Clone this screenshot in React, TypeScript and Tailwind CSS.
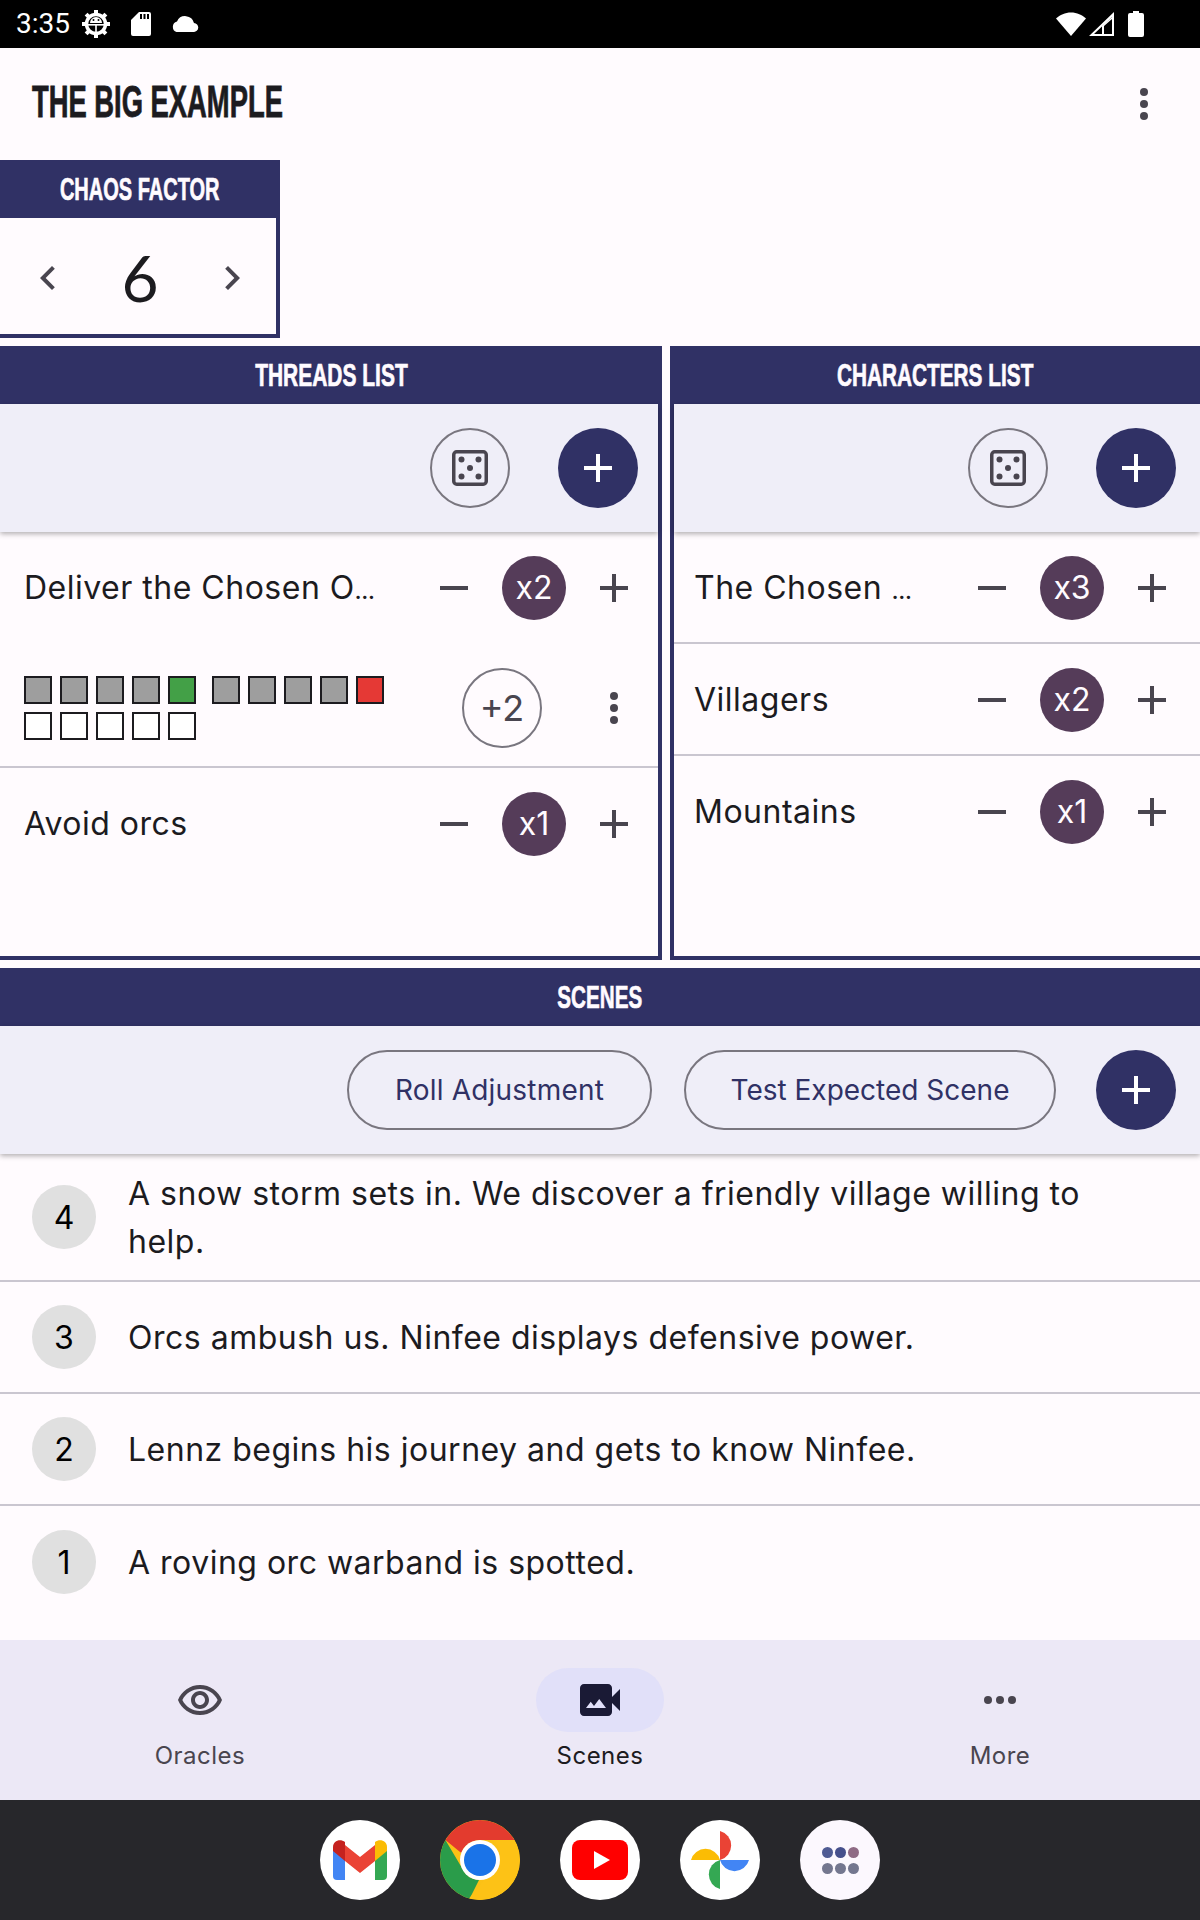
import type { ReactNode } from 'react'

const bodyFont = "font-['Inter',sans-serif]"
const headFont = "font-['Liberation_Sans',sans-serif]"

function Mi({ d, className }: { d: string; className?: string }) {
  return (
    <svg viewBox="0 0 24 24" className={className} fill="currentColor">
      <path d={d} />
    </svg>
  )
}

const ADD = 'M19 13h-6v6h-2v-6H5v-2h6V5h2v6h6v2z'
const REMOVE = 'M19 13H5v-2h14v2z'
const CHEV_L = 'M15.41 7.41 14 6l-6 6 6 6 1.41-1.41L10.83 12z'
const CHEV_R = 'M8.59 16.59 10 18l6-6-6-6-1.41 1.41L13.17 12z'
const EYE =
  'M12 6c3.79 0 7.17 2.13 8.82 5.5C19.17 14.87 15.79 17 12 17s-7.17-2.13-8.82-5.5C4.83 8.13 8.21 6 12 6m0-2C7 4 2.73 7.11 1 11.5 2.73 15.89 7 19 12 19s9.27-3.11 11-7.5C21.27 7.11 17 4 12 4zm0 5c1.38 0 2.5 1.12 2.5 2.5S13.38 14 12 14s-2.5-1.12-2.5-2.5S10.62 9 12 9m0-2c-2.48 0-4.5 2.02-4.5 4.5S9.52 16 12 16s4.5-2.02 4.5-4.5S14.48 7 12 7z'
const CAMERA =
  'M18 10.48V6c0-1.1-.9-2-2-2H4c-1.1 0-2 .9-2 2v12c0 1.1.9 2 2 2h12c1.1 0 2-.9 2-2v-4.48l4 3.98v-11l-4 3.98zM5 16l2.38-3.17L9 15l2.62-3.5L15 16H5z'

function VDots({ className }: { className?: string }) {
  return (
    <svg viewBox="0 0 8 32" className={className} fill="currentColor">
      <circle cx="4" cy="4" r="4" />
      <circle cx="4" cy="16" r="4" />
      <circle cx="4" cy="28" r="4" />
    </svg>
  )
}

function Dice() {
  return (
    <svg viewBox="0 0 36 36" className="w-9 h-9 text-[#49454f]" fill="currentColor">
      <rect x="1.750" y="1.750" width="32.500" height="32.500" rx="3" fill="none" stroke="currentColor" strokeWidth="3.500" />
      <circle cx="9.500" cy="9.500" r="3" />
      <circle cx="26.500" cy="9.500" r="3" />
      <circle cx="18" cy="18" r="3" />
      <circle cx="9.500" cy="26.500" r="3" />
      <circle cx="26.500" cy="26.500" r="3" />
    </svg>
  )
}

function Header({ scale, children }: { scale: string; children: ReactNode }) {
  return (
    <div className={`h-[58px] bg-[#303165] text-[#fffbff] flex items-center justify-center text-[32px] font-bold whitespace-nowrap [-webkit-text-stroke:0.7px_currentColor] ${headFont}`}>
      <span className={`inline-block ${scale}`}>{children}</span>
    </div>
  )
}

function RoundButton({ kind }: { kind: 'dice' | 'add' }) {
  if (kind === 'dice') {
    return (
      <div className="w-20 h-20 rounded-full border-2 border-[#79767f] flex items-center justify-center">
        <Dice />
      </div>
    )
  }
  return (
    <div className="w-20 h-20 rounded-full bg-[#303165] text-white flex items-center justify-center">
      <Mi d={ADD} className="w-12 h-12" />
    </div>
  )
}

function Toolbar({ pr, children }: { pr: string; children: ReactNode }) {
  return (
    <div className={`relative h-[128px] bg-[#efeef8] flex items-center justify-end gap-12 ${pr} shadow-[0_2px_5px_rgba(0,0,0,0.3)]`}>
      {children}
    </div>
  )
}

function Counter({ label }: { label: string }) {
  return (
    <div className="flex items-center gap-4 text-[#49454f]">
      <Mi d={REMOVE} className="w-16 h-16 p-2" />
      <div className="w-16 h-16 rounded-full bg-[#553c59] text-[#fffbff] flex items-center justify-center text-[32px]">
        {label}
      </div>
      <Mi d={ADD} className="w-16 h-16 p-2" />
    </div>
  )
}

function Ticks({ colors }: { colors: string[] }) {
  return (
    <div className="flex gap-2">
      {colors.map((c, i) => (
        <div key={i} className={`w-7 h-7 border-2 border-[#1c1b1f] ${c}`} />
      ))}
    </div>
  )
}

function ListRow({ title, cut, count, className }: { title: string; cut?: boolean; count: string; className: string }) {
  return (
    <div className={`h-[112px] flex items-center justify-between ${className}`}>
      <span className="text-[32px] tracking-[0.5px] text-[#1c1b1f] whitespace-nowrap">
        {title}
        {cut && <span className="text-[20px] font-bold tracking-normal">…</span>}
      </span>
      <Counter label={count} />
    </div>
  )
}

function Divider() {
  return <div className="h-0.5 -mt-0.5 bg-[#cac6d0]" />
}

function SceneRow({ n, text, tall, last }: { n: number; text: string; tall?: boolean; last?: boolean }) {
  return (
    <div className={`${tall ? 'h-[128px]' : 'h-[112px]'} flex items-center pl-8 pr-[60px] gap-8 ${last ? '' : 'border-b-2 border-[#cac6d0]'}`}>
      <div className="shrink-0 w-16 h-16 pt-0.5 rounded-full bg-[#e0e0e0] text-black flex items-center justify-center text-[32px]">
        {n}
      </div>
      <p className="pt-0.5 text-[32px] leading-[48px] tracking-[0.5px] text-[#1c1b1f]">{text}</p>
    </div>
  )
}

function NavItem({ label, active, children }: { label: string; active?: boolean; children: ReactNode }) {
  return (
    <div className="flex-1 flex flex-col items-center pt-7">
      <div className={`w-32 h-16 rounded-full flex items-center justify-center ${active ? 'bg-[#e1e0f9] text-[#1a1a35]' : 'text-[#49454f]'}`}>
        {children}
      </div>
      <span className={`mt-2 text-[24px] leading-[32px] tracking-[0.5px] ${active ? 'text-[#1c1b1f]' : 'text-[#49454f]'}`}>{label}</span>
    </div>
  )
}

function DockIcon({ children, bg = 'bg-white' }: { children: ReactNode; bg?: string }) {
  return <div className={`w-20 h-20 rounded-full overflow-hidden flex items-center justify-center ${bg}`}>{children}</div>
}

function StatusBar() {
  return (
    <div className="h-12 bg-black text-white flex items-center justify-between pl-4 font-['Roboto',sans-serif]">
      <div className="flex items-center">
        <span className="text-[28px] leading-none">3:35</span>
        <svg viewBox="0 0 28 28" className="w-7 h-7 ml-[12px]" fill="currentColor">
          <circle cx="14" cy="14" r="9.5" fill="none" stroke="currentColor" strokeWidth="3.500" />
          {[0, 45, 90, 135, 180, 225, 270, 315].map((a) => (
            <rect key={a} x="12" y="0" width="4" height="5" transform={`rotate(${a} 14 14)`} />
          ))}
          <path d="M8 13a6 6 0 0 1 12 0z" />
          <circle cx="11.500" cy="10" r="1" fill="#000" />
          <circle cx="16.500" cy="10" r="1" fill="#000" />
          <rect x="6" y="14" width="16" height="1.600" />
          <rect x="13.200" y="14" width="1.600" height="8" />
        </svg>
        <svg viewBox="0 0 20 24" className="w-5 h-6 ml-[21px]" fill="currentColor">
          <path fillRule="evenodd" d="M8 0h10a2 2 0 0 1 2 2v20a2 2 0 0 1-2 2H2a2 2 0 0 1-2-2V8zM9 2v5h2V2zM12.500 2v5h2V2zM16 2v5h2V2z" />
        </svg>
        <svg viewBox="0 0 28 16" className="w-7 h-4 ml-[20px]" fill="currentColor">
          <path d="M23 7a9 9 0 0 0-17-1.500A5.500 5.500 0 0 0 5.500 16h17a4.500 4.500 0 0 0 .5-9z" />
        </svg>
      </div>
      <div className="flex items-center">
        <svg viewBox="0 0 30 24" className="w-[30px] h-6" fill="currentColor">
          <path d="M15 24 0 6.500C4 3 9 .500 15 .500S26 3 30 6.500z" />
        </svg>
        <svg viewBox="0 0 25 24" className="w-[25px] h-6 ml-[3px]" fill="currentColor">
          <path fillRule="evenodd" d="M25 0v24H0zM23 5 5 22h18z" />
          <path d="M13 14 23 5v2l-8 7v8h-2z" />
        </svg>
        <svg viewBox="0 0 16 26" className="w-4 h-[26px] ml-[14px] mr-[56px]" fill="currentColor">
          <path d="M5 0h6v2h3a2 2 0 0 1 2 2v20a2 2 0 0 1-2 2H2a2 2 0 0 1-2-2V4a2 2 0 0 1 2-2h3z" />
        </svg>
      </div>
    </div>
  )
}

export default function App() {
  return (
    <div className={`w-[1200px] h-[1920px] overflow-hidden flex flex-col bg-[#fffbfe] ${bodyFont}`}>
      <StatusBar />

      <div className="h-[112px] flex items-center justify-between pl-8 pr-[52px]">
        <h1 className={`-mt-1 text-[44px] font-bold text-[#1c1b1f] whitespace-nowrap origin-left scale-x-[0.622] [-webkit-text-stroke:0.8px_currentColor] ${headFont}`}>THE BIG EXAMPLE</h1>
        <VDots className="w-2 h-8 text-[#49454f]" />
      </div>

      <div className="w-[280px] h-[178px] border-r-4 border-b-4 border-[#303165]">
        <div className="-mr-1">
          <Header scale="scale-x-[0.625]">CHAOS FACTOR</Header>
        </div>
        <div className="h-[116px] flex items-center justify-between pl-6 pr-5 pt-1">
          <Mi d={CHEV_L} className="w-12 h-12 text-[#49454f]" />
          <span className="text-[64px] leading-none text-[#1c1b1f] font-['Lato',sans-serif]">6</span>
          <Mi d={CHEV_R} className="w-12 h-12 text-[#49454f]" />
        </div>
      </div>

      <div className="mt-2 h-[614px] flex gap-2">
        <div className="w-[662px] border-r-4 border-b-4 border-[#303165]">
          <div className="-mr-1">
            <Header scale="scale-x-[0.655]">THREADS LIST</Header>
          </div>
          <Toolbar pr="pr-5">
            <RoundButton kind="dice" />
            <RoundButton kind="add" />
          </Toolbar>
          <ListRow title="Deliver the Chosen O" cut count="x2" className="pl-6 pr-3" />
          <div className="h-[124px] flex items-center border-b-2 border-[#cac6d0] pl-6 pr-10 pt-[5px]">
            <div className="flex flex-col gap-2">
              <div className="flex gap-4">
                <Ticks colors={['bg-[#9e9e9e]', 'bg-[#9e9e9e]', 'bg-[#9e9e9e]', 'bg-[#9e9e9e]', 'bg-[#43a047]']} />
                <Ticks colors={['bg-[#9e9e9e]', 'bg-[#9e9e9e]', 'bg-[#9e9e9e]', 'bg-[#9e9e9e]', 'bg-[#e53935]']} />
              </div>
              <Ticks colors={['bg-white', 'bg-white', 'bg-white', 'bg-white', 'bg-white']} />
            </div>
            <div className="flex items-center gap-[68px] ml-auto">
              <div className="w-20 h-20 rounded-full border-2 border-[#79767f] flex items-center justify-center text-[36px] text-[#49454f]">
                +2
              </div>
              <VDots className="w-2 h-8 text-[#49454f]" />
            </div>
          </div>
          <ListRow title="Avoid orcs" count="x1" className="pl-6 pr-3" />
        </div>

        <div className="flex-1 border-l-4 border-b-4 border-[#303165]">
          <div className="-ml-1">
            <Header scale="scale-x-[0.65]">CHARACTERS LIST</Header>
          </div>
          <Toolbar pr="pr-6">
            <RoundButton kind="dice" />
            <RoundButton kind="add" />
          </Toolbar>
          <ListRow title="The Chosen " cut count="x3" className="pl-5 pr-4" />
          <Divider />
          <ListRow title="Villagers" count="x2" className="pl-5 pr-4" />
          <Divider />
          <ListRow title="Mountains" count="x1" className="pl-5 pr-4" />
        </div>
      </div>

      <div className="mt-2">
        <Header scale="scale-x-[0.645]">SCENES</Header>
        <div className="relative h-[128px] bg-[#efeef8] flex items-center justify-end pr-6 gap-8 shadow-[0_2px_5px_rgba(0,0,0,0.3)]">
          <div className="h-20 w-[305px] rounded-full border-2 border-[#79767f] flex items-center justify-center text-[28px] tracking-[0.2px] text-[#303165]">
            Roll Adjustment
          </div>
          <div className="h-20 w-[372px] rounded-full border-2 border-[#79767f] flex items-center justify-center text-[28px] text-[#303165]">
            Test Expected Scene
          </div>
          <div className="ml-2">
            <RoundButton kind="add" />
          </div>
        </div>
      </div>

      <div className="flex-1">
        <SceneRow tall n={4} text="A snow storm sets in. We discover a friendly village willing to help." />
        <SceneRow n={3} text="Orcs ambush us. Ninfee displays defensive power." />
        <SceneRow n={2} text="Lennz begins his journey and gets to know Ninfee." />
        <SceneRow last n={1} text="A roving orc warband is spotted." />
      </div>

      <div className="h-[160px] bg-[#ece8f6] flex">
        <NavItem label="Oracles">
          <Mi d={EYE} className="w-12 h-12 mt-0.5" />
        </NavItem>
        <NavItem label="Scenes" active>
          <Mi d={CAMERA} className="w-12 h-12" />
        </NavItem>
        <NavItem label="More">
          <svg viewBox="0 0 32 8" className="w-8 h-2" fill="currentColor">
            <circle cx="4" cy="4" r="4" />
            <circle cx="16" cy="4" r="4" />
            <circle cx="28" cy="4" r="4" />
          </svg>
        </NavItem>
      </div>

      <div className="h-[120px] bg-[#27272b] flex items-center justify-center gap-10">
        <DockIcon>
          <svg viewBox="0 0 54 40" className="w-[54px] h-10">
            <path d="M0 10v26a4 4 0 0 0 4 4h8V16z" fill="#4285f4" />
            <path d="M54 10v26a4 4 0 0 1-4 4h-8V16z" fill="#34a853" />
            <path d="M12 5 27 17 42 5v16L27 33 12 21z" fill="#ea4335" />
            <path d="M0 7c0-6 7-9 12-5v19L0 11z" fill="#c5221f" />
            <path d="M54 7c0-6-7-9-12-5v19l12-10z" fill="#fbbc04" />
          </svg>
        </DockIcon>
        <DockIcon bg="bg-[#fbc116]">
          <svg viewBox="0 0 80 80" className="w-20 h-20">
            <path d="M40 0a40 40 0 0 1 34.600 20H40a20 20 0 0 0-18.700 13L5.400 20A40 40 0 0 1 40 0z" fill="#e33b2e" />
            <path d="M5.400 20 22 48a20 20 0 0 0 17 12L29 80A40 40 0 0 1 5.400 20z" fill="#2a9c4a" />
            <path d="M74.600 20A40 40 0 0 1 29 78.500L51 52a20 20 0 0 0 2-32z" fill="#fdc216" />
            <circle cx="40" cy="40" r="20" fill="#fff" />
            <circle cx="40" cy="40" r="16" fill="#1a73e8" />
          </svg>
        </DockIcon>
        <DockIcon>
          <svg viewBox="0 0 56 40" className="w-14 h-10">
            <rect width="56" height="40" rx="8" fill="#ff0000" />
            <path d="M22 11 38 20 22 29z" fill="#fff" />
          </svg>
        </DockIcon>
        <DockIcon>
          <svg viewBox="0 0 58 58" className="w-[58px] h-[58px]">
            <path d="M29 29V0a15 15 0 0 1 0 29z" fill="#ea4335" />
            <path d="M29 29h29a15 15 0 0 1-29 0z" fill="#4285f4" />
            <path d="M29 29v29a15 15 0 0 1 0-29z" fill="#34a853" />
            <path d="M29 29H0a15 15 0 0 1 29 0z" fill="#fbbc04" />
          </svg>
        </DockIcon>
        <DockIcon bg="bg-[#fcf8fe]">
          <svg viewBox="0 0 37 27" className="w-[37px] h-[27px]">
            <circle cx="5.500" cy="5.500" r="5.500" fill="#4f5b93" />
            <circle cx="18.500" cy="5.500" r="5.500" fill="#46508c" />
            <circle cx="31.500" cy="5.500" r="5.500" fill="#8f6b85" />
            <circle cx="5.500" cy="21.500" r="5.500" fill="#74778f" />
            <circle cx="18.500" cy="21.500" r="5.500" fill="#74778f" />
            <circle cx="31.500" cy="21.500" r="5.500" fill="#74778f" />
          </svg>
        </DockIcon>
      </div>
    </div>
  )
}
